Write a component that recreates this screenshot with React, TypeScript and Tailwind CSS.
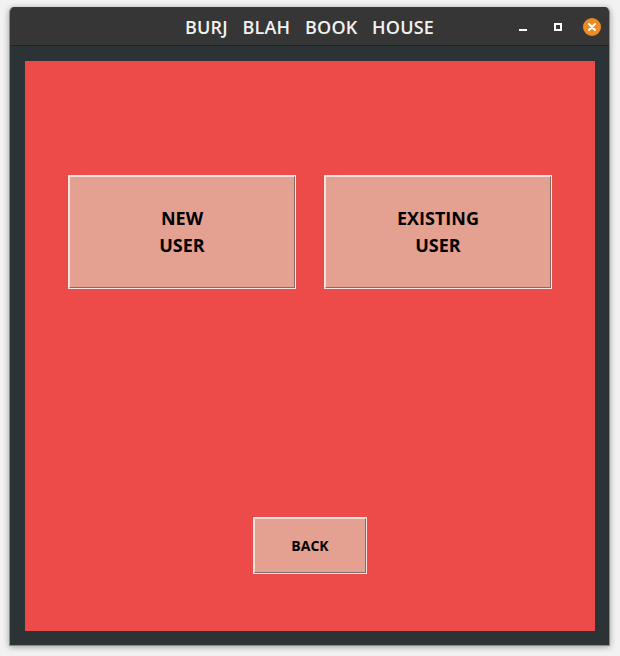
import React from "react";

function TkButton({ w, h, children, textClass }: { w: string; h: string; children: React.ReactNode; textClass: string }) {
  return (
    <div className={`${w} ${h} border border-[#eee4e0] flex`}>
      <div className={`flex-1 border border-t-[#f3e2dc] border-l-[#f3e2dc] border-b-[#7d6f6b] border-r-[#7d6f6b] bg-[#e4a090] flex items-center justify-center text-center text-black ${textClass}`}>
        {children}
      </div>
    </div>
  );
}

export default function App() {
  return (
    <div className="w-[620px] h-[656px] bg-[#f2f2f2] pt-[7px] pl-[9px] overflow-hidden" style={{ fontFamily: '"Open Sans", "Noto Sans", sans-serif' }}>
      <div className="w-[601px] h-[639px] rounded-t-[5px] shadow-[0_1px_6px_rgba(0,0,0,0.35)] border-x border-b border-[#8a8a8a] flex flex-col overflow-hidden">
        <div className="h-[39px] bg-[#363636] border-b border-[#232323] flex items-center relative shrink-0">
          <div className="absolute inset-0 flex items-center justify-center text-[#f2f2f2] text-[18px] font-semibold whitespace-pre tracking-[0.2px] pt-[2px]">
            {"BURJ   BLAH   BOOK   HOUSE"}
          </div>
          <div className="ml-auto flex items-center relative mr-[8px] mt-[1px]">
            <div className="w-[8px] h-[2px] bg-white mt-[7px] mr-[27px]" />
            <div className="w-[8px] h-[8px] border-2 border-white mr-[21px]" />
            <div className="w-[18px] h-[18px] rounded-full bg-[#f08a25] flex items-center justify-center">
              <svg width="10" height="10" viewBox="0 0 10 10">
                <path d="M2 2 L8 8 M8 2 L2 8" stroke="white" strokeWidth="2" strokeLinecap="round" />
              </svg>
            </div>
          </div>
        </div>
        <div className="flex-1 bg-[#2b3336] pt-[15px] pl-[15px]">
          <div className="w-[570px] h-[570px] bg-[#ed4a4a] flex flex-col">
            <div className="flex gap-[28px] pl-[43px] pt-[114px]">
              <TkButton w="w-[228px]" h="h-[114px]" textClass="text-[18px] font-bold leading-[27px]">
                <div>NEW<br />USER</div>
              </TkButton>
              <TkButton w="w-[228px]" h="h-[114px]" textClass="text-[18px] font-bold leading-[27px]">
                <div>EXISTING<br />USER</div>
              </TkButton>
            </div>
            <div className="flex justify-center pt-[228px]">
              <TkButton w="w-[114px]" h="h-[57px]" textClass="text-[14px] font-bold">
                <div>BACK</div>
              </TkButton>
            </div>
          </div>
        </div>
      </div>
    </div>
  );
}
